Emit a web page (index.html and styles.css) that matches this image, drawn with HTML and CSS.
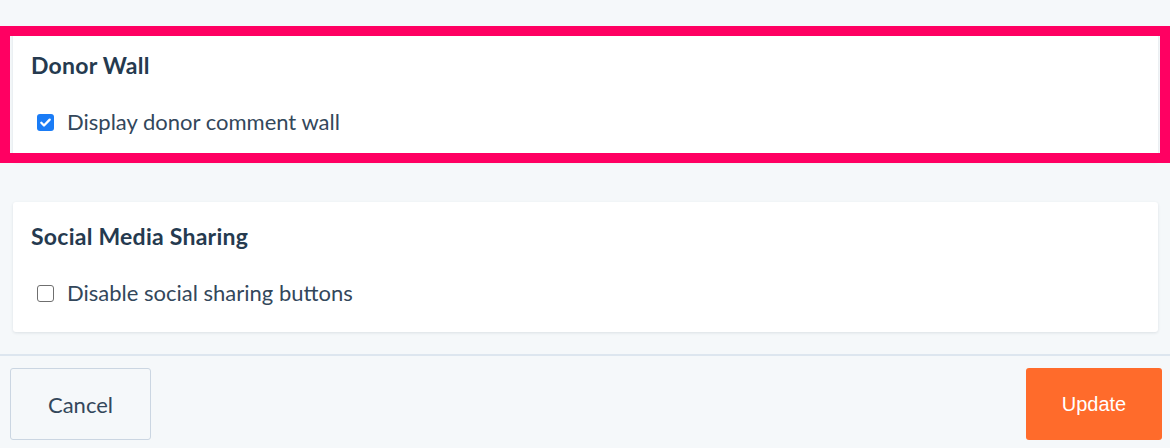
FILE: index.html
```html
<!DOCTYPE html>
<html>
<head>
<meta charset="utf-8">
<link rel="stylesheet" href="styles.css">
</head>
<body>
<div class="page">
  <div class="content">
    <section class="card highlighted">
      <h2 class="card-title">Donor Wall</h2>
      <label class="check-row">
        <span class="box checked">
          <svg width="17" height="17" viewBox="0 0 17 17"><path d="M4.3 8.8l2.7 2.7L12.7 5.6" fill="none" stroke="#fff" stroke-width="2.3" stroke-linecap="round" stroke-linejoin="round"/></svg>
        </span>
        <span class="check-label">Display donor comment wall</span>
      </label>
      <div class="highlight"></div>
    </section>
    <section class="card">
      <h2 class="card-title">Social Media Sharing</h2>
      <label class="check-row">
        <span class="box"></span>
        <span class="check-label">Disable social sharing buttons</span>
      </label>
    </section>
  </div>
  <footer class="footer">
    <button class="btn btn-cancel">Cancel</button>
    <button class="btn btn-update">Update</button>
  </footer>
</div>
</body>
</html>
```
FILE: styles.css
```css
* { box-sizing: border-box; }
html, body { margin: 0; padding: 0; }
body {
  background: #f5f8fa;
  font-family: Lato, "Open Sans", sans-serif;
  color: #33475b;
  width: 1170px;
  height: 448px;
  overflow: hidden;
}
.page { position: relative; height: 448px; }
.content {
  padding: 31px 12px 0 13px;
  display: flex;
  flex-direction: column;
  gap: 41px;
}
.card {
  position: relative;
  background: #fff;
  border-radius: 3px;
  box-shadow: 0 1px 3px rgba(45, 62, 80, 0.12);
  height: 130px;
  padding: 20px 18px 0 18px;
}
.card-title {
  margin: 0;
  font-size: 23px;
  font-weight: 700;
  line-height: 28px;
  letter-spacing: 0.25px;
  color: #253a4f;
}
.check-row {
  display: flex;
  align-items: center;
  gap: 13px;
  margin-top: 31px;
  margin-left: 6px;
  height: 24px;
}
.box {
  width: 17px;
  height: 17px;
  border: 1.5px solid #6f6f6f;
  border-radius: 3px;
  background: #fff;
  display: flex;
  flex: none;
}
.box.checked {
  background: #1a7cf6;
  border: none;
}
.check-label {
  font-size: 22px;
  color: #33475b;
  line-height: 24px;
}
.highlight {
  position: absolute;
  top: -5px;
  left: -13px;
  right: -12px;
  bottom: -2px;
  border: 10px solid #ff0062;
  pointer-events: none;
}
.footer {
  position: absolute;
  top: 354px;
  left: 0;
  right: 0;
  height: 94px;
  border-top: 2px solid #dde6ef;
  display: flex;
  justify-content: space-between;
  padding: 12px 8px 0 10px;
}
.btn {
  height: 72px;
  border-radius: 3px;
  cursor: pointer;
}
.btn-cancel {
  width: 141px;
  background: #f5f8fa;
  border: 1px solid #cbd6e2;
  color: #33475b;
  font-size: 22px;
  font-family: Lato, "Open Sans", sans-serif;
}
.btn-update {
  width: 136px;
  background: #ff6b2b;
  border: none;
  color: #fff;
  font-size: 20px;
  font-family: "Liberation Sans", Arial, sans-serif;
}
```
